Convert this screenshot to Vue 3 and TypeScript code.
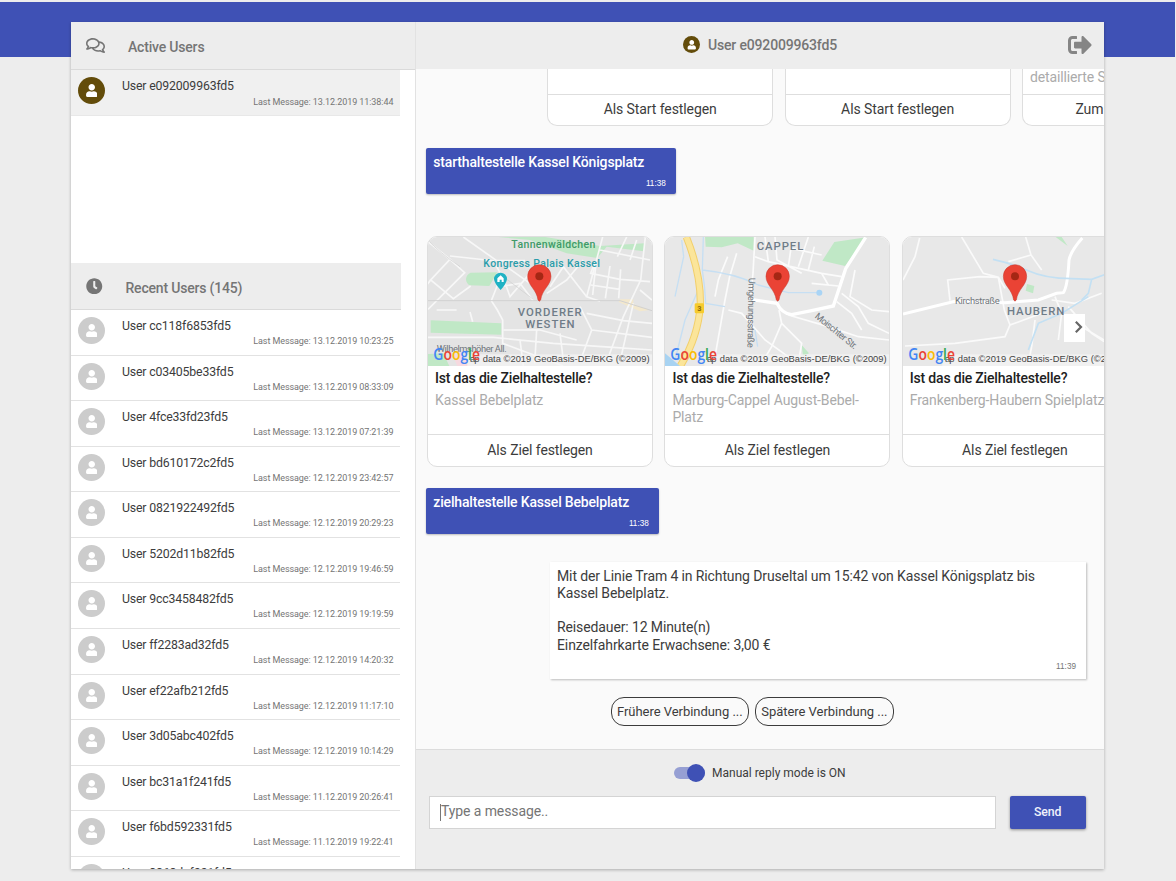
<script setup lang="ts">
interface ChatUser {
  id: string
  last: string
}

const icons = {
  user: 'M224 256c70.7 0 128-57.3 128-128S294.7 0 224 0 96 57.3 96 128s57.3 128 128 128zm89.6 32h-16.7c-22.2 10.2-46.9 16-72.9 16s-50.6-5.8-72.9-16h-16.7C60.2 288 0 348.2 0 422.4V464c0 26.5 21.5 48 48 48h352c26.5 0 48-21.5 48-48v-41.6c0-74.2-60.2-134.4-134.4-134.4z',
  comments:
    'M532 386.2c27.5-27.1 44-61.1 44-98.2 0-80-76.5-146.1-176.2-157.9C368.3 72.5 294.3 32 208 32 93.1 32 0 103.6 0 192c0 37 16.5 71 44 98.2-15.3 30.7-37.3 54.5-37.7 54.9-6.3 6.7-8.1 16.5-4.4 25 3.6 8.5 12 14 21.2 14 53.5 0 96.7-20.2 125.2-38.8 9.2 2.1 18.7 3.7 28.4 4.9C208.1 407.6 281.8 448 368 448c20.8 0 40.8-2.4 59.8-6.8C456.3 459.7 499.4 480 553 480c9.2 0 17.5-5.5 21.2-14 3.6-8.5 1.9-18.3-4.4-25-.4-.3-22.5-24.1-37.8-54.8zm-392.8-92.3L122.1 305c-14.1 9.1-28.5 16.3-43.1 21.4 2.7-4.7 5.4-9.7 8-14.8l15.5-31.1L77.7 256C64.2 242.6 48 220.7 48 192c0-60.7 73.3-112 160-112s160 51.3 160 112-73.3 112-160 112c-16.5 0-33-1.9-49-5.6l-19.8-4.5zM498.3 352l-24.7 24.4 15.5 31.1c2.6 5.1 5.3 10.1 8 14.8-14.6-5.1-29-12.3-43.1-21.4l-17.1-11.1-19.9 4.6c-16 3.7-32.5 5.6-49 5.6-54 0-102.2-20.1-131.3-49.7C338 339.5 416 272.9 416 192c0-3.4-.4-6.7-.7-10C479.7 196.5 528 238.8 528 288c0 28.7-16.2 50.6-29.7 64z',
  clock:
    'M256,8C119,8,8,119,8,256S119,504,256,504,504,393,504,256,393,8,256,8Zm92.49,313h0l-20,25a16,16,0,0,1-22.49,2.5h0l-67-49.72a40,40,0,0,1-15-31.23V112a16,16,0,0,1,16-16h32a16,16,0,0,1,16,16V256l58,42.5A16,16,0,0,1,348.49,321Z',
  signOut:
    'M497 273L329 441c-15 15-41 4.5-41-17v-96H152c-13.3 0-24-10.7-24-24v-96c0-13.3 10.7-24 24-24h136V88c0-21.4 25.9-32 41-17l168 168c9.3 9.4 9.3 24.6 0 34zM192 436v-40c0-6.6-5.4-12-12-12H96c-17.7 0-32-14.3-32-32V160c0-17.7 14.3-32 32-32h84c6.6 0 12-5.4 12-12V76c0-6.6-5.4-12-12-12H96c-53 0-96 43-96 96v192c0 53 43 96 96 96h84c6.6 0 12-5.4 12-12z',
}

const activeUser: ChatUser = { id: 'e092009963fd5', last: '13.12.2019 11:38:44' }

const recentUsers: ChatUser[] = [
  { id: 'cc118f6853fd5', last: '13.12.2019 10:23:25' },
  { id: 'c03405be33fd5', last: '13.12.2019 08:33:09' },
  { id: '4fce33fd23fd5', last: '13.12.2019 07:21:39' },
  { id: 'bd610172c2fd5', last: '12.12.2019 23:42:57' },
  { id: '0821922492fd5', last: '12.12.2019 20:29:23' },
  { id: '5202d11b82fd5', last: '12.12.2019 19:46:59' },
  { id: '9cc3458482fd5', last: '12.12.2019 19:19:59' },
  { id: 'ff2283ad32fd5', last: '12.12.2019 14:20:32' },
  { id: 'ef22afb212fd5', last: '12.12.2019 11:17:10' },
  { id: '3d05abc402fd5', last: '12.12.2019 10:14:29' },
  { id: 'bc31a1f241fd5', last: '11.12.2019 20:26:41' },
  { id: 'f6bd592331fd5', last: '11.12.2019 19:22:41' },
  { id: '3868daf221fd5', last: '11.12.2019 18:05:12' },
]

const startCards = [
  { text: '', action: 'Als Start festlegen' },
  { text: '', action: 'Als Start festlegen' },
  { text: 'detaillierte Suche', action: 'Zum Ticketangebot' },
]

const zielCards = [
  { map: 'kassel', view: '24 21 672 387', left: 24, text: 'Kassel Bebelplatz' },
  { map: 'cappel', view: '30 21 672 387', left: 30, text: 'Marburg-Cappel August-Bebel-Platz' },
  { map: 'haubern', view: '24 21 672 387', left: 24, text: 'Frankenberg-Haubern Spielplatz' },
]
</script>

<template>
  <div class="page">
    <div class="band"></div>
    <div class="app">
      <aside class="side">
        <header class="side-head">
          <svg class="i-comments" viewBox="0 0 576 512"><path :d="icons.comments" /></svg>
          <span>Active Users</span>
        </header>
        <div class="active-list">
          <div class="row current">
            <div class="avatar">
              <svg viewBox="0 0 448 512"><path :d="icons.user" /></svg>
            </div>
            <div class="name">User {{ activeUser.id }}</div>
            <div class="last">Last Message: {{ activeUser.last }}</div>
          </div>
        </div>
        <header class="side-head recent-head">
          <svg class="i-clock" viewBox="0 0 512 512"><path :d="icons.clock" /></svg>
          <span>Recent Users (145)</span>
        </header>
        <div class="recent-list">
          <div v-for="u in recentUsers" :key="u.id" class="row">
            <div class="avatar">
              <svg viewBox="0 0 448 512"><path :d="icons.user" /></svg>
            </div>
            <div class="name">User {{ u.id }}</div>
            <div class="last">Last Message: {{ u.last }}</div>
          </div>
        </div>
      </aside>

      <main class="chat">
        <header class="chat-head">
          <div class="mini-avatar">
            <svg viewBox="0 0 448 512"><path :d="icons.user" /></svg>
          </div>
          <span>User {{ activeUser.id }}</span>
          <svg class="i-out" viewBox="0 0 512 512"><path :d="icons.signOut" /></svg>
        </header>

        <section class="messages">
          <div class="cards start">
            <div v-for="(c, i) in startCards" :key="i" class="card cut">
              <div class="cut-body">{{ c.text }}</div>
              <div class="action">{{ c.action }}</div>
            </div>
          </div>

          <div class="mine first">
            <div class="mine-text">starthaltestelle Kassel Königsplatz</div>
            <div class="time">11:38</div>
          </div>

          <div class="cards ziel">
            <div v-for="c in zielCards" :key="c.map" class="card">
              <svg class="map" :viewBox="c.view" preserveAspectRatio="none">
                <rect x="0" y="0" width="720" height="420" :fill="c.map === 'kassel' ? '#e4e4e4' : '#e8e8e8'" />

                <g v-if="c.map === 'kassel'">
                  <g fill="#c0e8c6">
                    <path d="M225 20H370L540 48L673 40L671 64L560 50L532 84L440 70L330 30Z" />
                    <path d="M152 128L232 127L208 168L150 166Q138 160 138 146Q140 132 152 128Z" />
                    <path d="M32 271L244 280V314L32 308Z" />
                    <path d="M24 372L70 370L88 408H24Z" />
                  </g>
                  <path d="M98 376L128 372L150 408H112Z" fill="#f6d9df" />
                  <path d="M600 208H640V222L690 240L660 244L596 216Z" fill="#f3e8cd" />
                  <g fill="none" stroke="#f7f7f7" stroke-width="5">
                    <path d="M24 35L90 88L32 150L100 206L152 168" />
                    <path d="M90 88L134 128L24 238M90 78L220 92L240 128" />
                    <path d="M32 150L8 180M130 21L230 92M230 92L315 92" />
                    <path d="M236 156L214 212L232 240L248 270V340L430 408" />
                    <path d="M240 170L300 160L340 212M240 96L330 160M245 130L270 200L330 130" />
                    <path d="M390 170L430 110L500 200M380 190L440 150L490 90" />
                    <path d="M548 21L500 200L540 214M540 60L690 90M525 95L512 130L600 148L690 155" />
                    <path d="M512 165L600 178M528 100L518 195M570 108L556 205M602 118L596 205" />
                    <path d="M676 21L662 150L610 260L560 395M592 80L620 21M630 90L650 30" />
                    <path d="M480 230L515 300L480 395M515 300L696 322M500 250L610 272L696 280" />
                    <path d="M24 322L220 322L400 340L580 352L696 360M300 330L310 408M350 300L344 400M420 310L430 390" />
                    <path d="M150 246L158 275M50 240L110 240M640 220L600 395M250 300L360 300L470 330M660 180L696 210" />
                  </g>
                  <path d="M24 212H600L696 242" fill="none" stroke="#d1d1d1" stroke-width="3" />
                  <path d="M24 30Q55 65 120 110M250 140L340 208" fill="none" stroke="#cfcfcf" stroke-width="2" />
                  <text x="274" y="54" textLength="252" class="m-green">Tannenwäldchen</text>
                  <text x="190" y="111" textLength="350" class="m-teal">Kongress Palais Kassel</text>
                  <path d="M242 128A19 19 0 0 1 261 147Q260 160 242 180Q223 160 222 147A19 19 0 0 1 242 128Z" fill="#1fb2c4" />
                  <path d="M242 136L251 145V156H245V149H239V156H232V145Z" fill="#fff" />
                  <text x="293" y="258" textLength="192" class="m-area">VORDERER</text>
                  <text x="316" y="293" textLength="148" class="m-area">WESTEN</text>
                  <text x="50" y="367" textLength="210" class="m-street">Wilhelmshöher All.</text>
                </g>

                <g v-else-if="c.map === 'cappel'">
                  <g fill="#c0e8c6">
                    <path d="M150 20H250L296 20V62L248 40L200 52L152 50Z" />
                    <path d="M538 36L634 22L570 108L502 92Z" />
                    <path d="M440 345L462 370L444 378Z" />
                  </g>
                  <g fill="none" stroke="#fbfbfb" stroke-width="5">
                    <path d="M300 21L294 130L286 208M218 80L190 150L180 200M245 70L224 140L210 210L180 380" />
                    <path d="M360 21L366 90L440 130M300 80L340 95L500 130L560 140M330 21L340 95M410 40L400 110" />
                    <path d="M460 21L430 110M478 50L460 120M410 55L500 75M600 120L585 200L650 240L702 245M560 190L610 230L640 280L702 310" />
                    <path d="M545 215L590 250L620 300M372 240L380 280L350 350L320 400M380 280L440 340L430 400M400 255L520 290L610 320L702 330" />
                    <path d="M220 240L260 250L330 330L420 395M500 130L520 165M470 160L550 168" />
                  </g>
                  <path d="M286 208L366 220Q380 250 410 254L470 242L535 228L572 116L632 22" fill="none" stroke="#fff" stroke-width="10" />
                  <g fill="none" stroke="#c6dff3" stroke-width="4">
                    <path d="M145 21L142 120Q150 170 152 220L210 230M142 120Q240 130 310 165L400 188L490 188" />
                    <path d="M86 80L60 200M80 30L86 80M130 180L90 270L60 390M300 300L308 350" />
                  </g>
                  <circle cx="493" cy="188" r="9" fill="#a9d4f5" />
                  <path d="M94 21Q138 130 136 225Q130 320 76 408" fill="none" stroke="#f2cf6b" stroke-width="22" />
                  <path d="M94 21Q138 130 136 225Q130 320 76 408" fill="none" stroke="#fbe59a" stroke-width="16" />
                  <path d="M30 370L75 408H30Z" fill="#a8d3f2" />
                  <rect x="119" y="220" width="28" height="30" rx="4" fill="#f6cb2d" />
                  <text x="127" y="242" class="m-road">3</text>
                  <text x="305" y="59" textLength="140" class="m-area">CAPPEL</text>
                  <text transform="translate(281 143) rotate(91)" x="0" y="0" textLength="210" class="m-street">Umgehungsstraße</text>
                  <text transform="translate(478 262) rotate(39)" x="0" y="0" textLength="154" class="m-street">Moischter Str.</text>
                </g>

                <g v-else>
                  <path d="M482 21H500L518 48Z" fill="#c0e8c6" />
                  <path d="M396 162L418 168L414 190L392 182Z" fill="#c0e8c6" />
                  <g fill="none" stroke="#fafafa" stroke-width="5">
                    <path d="M74 24L60 80L24 150M200 21L265 130L310 142L330 175M165 212L158 150L255 140L310 142" />
                    <path d="M392 21L408 75L440 120M408 75L340 95M30 348L180 340L330 320L345 285L440 250" />
                    <path d="M310 142L328 240L345 285M420 270L410 350L400 400M470 210L540 220L620 190M560 290L627 330L696 350" />
                    <path d="M480 200L500 250L490 330M520 230L590 310L627 335" />
                  </g>
                  <path d="M24 252L180 214L330 218L430 210L485 190L505 188Q518 170 522 90Q528 62 562 24" fill="none" stroke="#fff" stroke-width="9" />
                  <g fill="none" stroke="#c3e0f3" stroke-width="5">
                    <path d="M294 88Q350 100 400 122Q450 145 530 146L590 148L640 130M590 148L580 190L560 210" />
                    <path d="M400 360L430 280L500 250L580 200" />
                  </g>
                  <text x="180" y="222" textLength="134" class="m-street">Kirchstraße</text>
                  <text x="336" y="256" textLength="172" class="m-area">HAUBERN</text>
                </g>

                <g :transform="`translate(${c.map === 'cappel' ? 368 : c.map === 'kassel' ? 358 : 360} 0)`">
                  <path d="M0 104A35 35 0 0 1 35 139C35 166 8 178 4 210Q0 217 -4 210C-8 178 -35 166 -35 139A35 35 0 0 1 0 104Z" fill="#ea4335" stroke="#c5372c" stroke-width="1.5" />
                  <circle cx="0" cy="139" r="12" fill="#a52714" />
                </g>

                <g :transform="`translate(${c.left} 0)`">
                  <rect x="118" y="373" width="560" height="36" fill="#f5f5f5" fill-opacity="0.7" />
                  <text x="164" y="395" textLength="501" class="m-copy">data ©2019 GeoBasis-DE/BKG (©2009)</text>
                  <text x="126" y="395" textLength="28" class="m-copy">ap</text>
                  <text x="16" y="390" textLength="140" lengthAdjust="spacingAndGlyphs" class="m-logo"><tspan fill="#4285f4">G</tspan><tspan fill="#ea4335">o</tspan><tspan fill="#fbbc05">o</tspan><tspan fill="#4285f4">g</tspan><tspan fill="#34a853">l</tspan><tspan fill="#ea4335">e</tspan></text>
                </g>
              </svg>
              <div class="card-body">
                <div class="card-title">Ist das die Zielhaltestelle?</div>
                <div class="card-text">{{ c.text }}</div>
              </div>
              <div class="action">Als Ziel festlegen</div>
            </div>
            <button class="next">
              <svg viewBox="0 0 10 14"><path d="M1.8 1.8L7 7L1.8 12.2" /></svg>
            </button>
          </div>

          <div class="mine second">
            <div class="mine-text">zielhaltestelle Kassel Bebelplatz</div>
            <div class="time">11:38</div>
          </div>

          <div class="bot">
            <p>Mit der Linie Tram 4 in Richtung Druseltal um 15:42 von Kassel Königsplatz bis<br />Kassel Bebelplatz.</p>
            <p>Reisedauer: 12 Minute(n)<br />Einzelfahrkarte Erwachsene: 3,00 €</p>
            <div class="time">11:39</div>
          </div>

          <div class="quick">
            <button>Frühere Verbindung ...</button>
            <button>Spätere Verbindung ...</button>
          </div>
        </section>

        <footer class="composer">
          <div class="mode">
            <span class="switch"><i></i></span>
            <span>Manual reply mode is ON</span>
          </div>
          <div class="entry">
            <div class="field"><span class="caret"></span><span>Type a message..</span></div>
            <button class="send">Send</button>
          </div>
        </footer>
      </main>
    </div>
  </div>
</template>

<style>
body {
  margin: 0;
  overflow: hidden;
}
</style>

<style scoped>
* {
  box-sizing: border-box;
}
.page {
  position: relative;
  width: 1176px;
  height: 881px;
  padding: 22px 72px 0 71px;
  background: #ededed;
  font-family: Roboto, 'Liberation Sans', sans-serif;
  color: #3c3c3c;
  overflow: hidden;
}
button {
  font-family: inherit;
  padding: 0;
  margin: 0;
}
.band {
  position: absolute;
  left: 0;
  top: 2px;
  width: 1175px;
  height: 55px;
  background: #3f51b5;
}
.app {
  position: relative;
  display: flex;
  width: 1033px;
  height: 847px;
  background: #fff;
  box-shadow: 0 1px 3px rgba(0, 0, 0, 0.28);
}
.side {
  width: 345px;
  height: 847px;
  display: flex;
  flex-direction: column;
  border-right: 1px solid #e2e2e2;
  overflow: hidden;
}
.side-head {
  display: flex;
  align-items: center;
  flex: none;
  height: 48px;
  padding-left: 15px;
  background: #ededed;
  border-bottom: 1px solid #dadada;
  font-size: 14px;
  font-weight: 500;
  letter-spacing: -0.19px;
  color: #757575;
}
.side-head span {
  padding-top: 3px;
}
.side-head svg {
  fill: #757575;
}
.i-comments {
  width: 19px;
  height: 17px;
  margin-right: 23px;
}
.recent-head {
  width: 329.5px;
  height: 47px;
}
.i-clock {
  width: 16.5px;
  height: 16.5px;
  margin-right: 23px;
}
.active-list {
  flex: none;
  height: 193px;
}
.recent-list {
  flex: 1;
  min-height: 0;
  overflow: hidden;
}
.row {
  display: grid;
  grid-template-columns: 44px 1fr;
  grid-template-rows: 24px 1fr;
  width: 329.4px;
  height: 45.58px;
  padding: 4px 7px 0;
  border-bottom: 1px solid #e2e2e2;
}
.row.current {
  background: #f0f0f0;
  border-color: #e8e8e8;
}
.avatar {
  grid-row: 1 / 3;
  display: flex;
  align-items: center;
  justify-content: center;
  width: 27px;
  height: 27px;
  margin-top: 3px;
  border-radius: 50%;
  background: #ccc;
}
.current .avatar {
  background: #634c0a;
}
.avatar svg {
  width: 11.5px;
  height: 13px;
  fill: #fff;
}
.name {
  font-size: 12.3px;
  letter-spacing: -0.16px;
  line-height: 24px;
  white-space: nowrap;
}
.last {
  font-size: 9px;
  letter-spacing: -0.08px;
  line-height: 7px;
  text-align: right;
  color: #757575;
  white-space: nowrap;
}
.current .last {
  line-height: 8px;
}
.chat {
  width: 688px;
  display: flex;
  flex-direction: column;
  background: #fafafa;
  overflow: hidden;
}
.chat-head {
  display: flex;
  align-items: center;
  flex: none;
  height: 47px;
  padding: 0 12px 1.5px 267px;
  background: #ededed;
  font-size: 14px;
  font-weight: 500;
  letter-spacing: -0.17px;
  color: #757575;
}
.mini-avatar {
  display: flex;
  align-items: center;
  justify-content: center;
  width: 17px;
  height: 17px;
  margin-right: 8px;
  border-radius: 50%;
  background: #634c0a;
}
.mini-avatar svg {
  width: 9.5px;
  height: 9.5px;
  fill: #fff;
}
.i-out {
  width: 24px;
  height: 24px;
  margin-left: auto;
  fill: #858585;
}
.messages {
  flex: none;
  height: 680px;
  overflow: hidden;
}
.cards {
  position: relative;
  display: flex;
  gap: 11.4px;
}
.start {
  margin-left: 131.2px;
}
.ziel {
  margin: 42.4px 0 0 11px;
}
.card {
  flex: none;
  width: 226px;
  height: 231px;
  background: #fff;
  border: 1px solid #dedede;
  border-radius: 10px;
  overflow: hidden;
}
.card.cut {
  height: 57px;
  border-top: 0;
  border-radius: 0 0 10px 10px;
}
.cut-body {
  height: 25px;
  padding-left: 7px;
  font-size: 14px;
  letter-spacing: -0.13px;
  line-height: 17px;
  color: #ababab;
}
.action {
  height: 32px;
  border-top: 1px solid #dedede;
  font-size: 14px;
  letter-spacing: -0.09px;
  line-height: 31px;
  text-align: center;
}
.cut .action {
  line-height: 29px;
}
.map {
  display: block;
  width: 224px;
  height: 129px;
}
.card-body {
  height: 68px;
  padding: 2px 7px 0;
}
.card-title {
  font-size: 14px;
  font-weight: 500;
  letter-spacing: -0.19px;
  line-height: 20px;
  color: #212121;
  white-space: nowrap;
}
.card-text {
  margin-top: 4px;
  font-size: 14px;
  letter-spacing: -0.13px;
  line-height: 17.3px;
  color: #ababab;
}
.m-green,
.m-teal,
.m-area,
.m-street,
.m-road {
  font-family: Roboto, sans-serif;
}
.m-green {
  font-size: 31.5px;
  font-weight: 500;
  fill: #3e9a68;
}
.m-teal {
  font-size: 31.5px;
  font-weight: 500;
  fill: #2a9dab;
}
.m-area {
  font-size: 34px;
  font-weight: 500;
  fill: #6f7c88;
}
.m-street {
  font-size: 28px;
  fill: #6f757b;
}
.m-road {
  font-size: 22px;
  font-weight: 700;
  fill: #8a6a10;
}
.m-copy {
  font-family: 'Liberation Sans', sans-serif;
  font-size: 28px;
  fill: #444;
}
.m-logo {
  font-family: 'Open Sans', sans-serif;
  font-size: 47px;
  font-weight: 600;
}
.next {
  position: absolute;
  left: 637.4px;
  top: 78.5px;
  display: flex;
  align-items: center;
  justify-content: center;
  width: 21px;
  height: 27.5px;
  background: #fff;
  border: 0;
}
.next svg {
  width: 10px;
  height: 14px;
  margin-left: 9px;
  margin-bottom: 2px;
  fill: none;
  stroke: #666;
  stroke-width: 2.2;
}
.mine {
  height: 46px;
  margin-left: 10.3px;
  padding: 5px 10.5px 0 7px;
  background: #3f51b5;
  border-radius: 2px;
  box-shadow: 0 1px 2px rgba(0, 0, 0, 0.25);
  color: #fff;
}
.first {
  width: 250px;
  margin-top: 21.5px;
}
.second {
  width: 233px;
  margin-top: 21px;
}
.mine-text {
  font-size: 14px;
  font-weight: 500;
  letter-spacing: -0.175px;
  line-height: 19px;
  white-space: nowrap;
}
.time {
  font-family: 'Liberation Sans', sans-serif;
  font-size: 8.2px;
  line-height: 10px;
  text-align: right;
}
.mine .time {
  margin-top: 7px;
}
.bot {
  width: 536.5px;
  height: 117px;
  margin: 28px 0 0 133.5px;
  padding: 6px 10px 0 7.5px;
  background: #fff;
  box-shadow: 1px 1px 2px rgba(0, 0, 0, 0.25);
  font-size: 14px;
  letter-spacing: -0.115px;
  line-height: 17.3px;
}
.bot p {
  margin: 0 0 17px;
  white-space: nowrap;
}
.bot .time {
  margin-top: -9px;
  letter-spacing: 0;
  color: #757575;
}
.quick {
  display: flex;
  gap: 6px;
  margin: 18px 0 0 194.5px;
}
.quick button {
  width: 138.6px;
  height: 29px;
  background: transparent;
  border: 1px solid #3c3c3c;
  border-radius: 13px;
  font-size: 13px;
  letter-spacing: -0.04px;
  color: #3c3c3c;
  white-space: nowrap;
}
.composer {
  flex: 1;
  background: #ededed;
  border-top: 1px solid #dcdcdc;
}
.mode {
  display: flex;
  align-items: center;
  height: 46px;
  padding-left: 258px;
  font-size: 12px;
  line-height: 16px;
}
.switch {
  display: flex;
  align-items: center;
  justify-content: flex-end;
  width: 31px;
  height: 12px;
  margin-right: 7px;
  border-radius: 6px;
  background: #969fd3;
}
.switch i {
  width: 18px;
  height: 18px;
  border-radius: 50%;
  background: #3f51b5;
}
.entry {
  display: flex;
  align-items: flex-start;
  gap: 13.6px;
  padding-left: 13px;
}
.field {
  display: flex;
  align-items: center;
  width: 567px;
  height: 32.5px;
  padding-left: 10px;
  background: #fff;
  border: 1px solid #d4d4d4;
  font-size: 14px;
  letter-spacing: -0.1px;
  color: #757575;
}
.field > span + span {
  margin-top: -3px;
}
.caret {
  width: 1px;
  height: 17px;
  background: #777;
}
.send {
  width: 76px;
  height: 33px;
  padding-bottom: 2px;
  background: #3f51b5;
  border: 0;
  border-radius: 2px;
  box-shadow: 0 1px 3px rgba(0, 0, 0, 0.4);
  font-size: 12.3px;
  font-weight: 500;
  letter-spacing: -0.1px;
  color: #f0f1fb;
}
</style>
